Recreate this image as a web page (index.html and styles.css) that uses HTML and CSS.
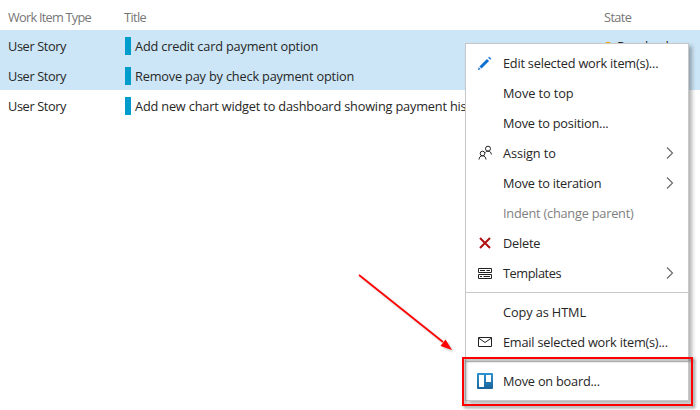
FILE: index.html
```
<!DOCTYPE html>
<html lang="en">
<head>
<meta charset="utf-8">
<title>Backlog</title>
<link rel="stylesheet" href="styles.css">
</head>
<body>
<div class="grid">
  <div class="row head"><span class="type-head">Work Item Type</span><span>Title</span><span>State</span></div>
  <div class="row selected"><span class="type">User Story</span><span class="title"><i class="bar"></i>Add credit card payment option</span><span class="state"><i class="dot"></i>Resolved</span></div>
  <div class="row selected"><span class="type">User Story</span><span class="title"><i class="bar"></i>Remove pay by check payment option</span><span></span></div>
  <div class="row"><span class="type">User Story</span><span class="title"><i class="bar"></i>Add new chart widget to dashboard showing payment history</span><span></span></div>
</div>

<div class="menu">
  <div class="item"><svg class="icon" viewBox="0 0 16 16"><path d="M3.500 12.500 11 5" stroke="#106fd2" stroke-width="3"/><path d="m12.200 3.800 1-1" stroke="#106fd2" stroke-width="3"/><path d="m1 15 .8-2.700L3.700 14.200z" fill="#106fd2"/></svg><span>Edit selected work item(s)...</span></div>
  <div class="item loose"><i class="icon"></i><span>Move to top</span></div>
  <div class="item"><i class="icon"></i><span>Move to position...</span></div>
  <div class="item loose"><svg class="icon line" viewBox="0 0 16 16"><circle cx="5.500" cy="8.500" r="2.300"/><path d="M2 14.500c.2-2.400 1.400-3.700 3.500-3.700s3.300 1.300 3.500 3.700"/><circle cx="11" cy="3.700" r="2.500"/><path d="M8.200 7.600c.7-1 1.500-1.400 2.800-1.400 2.200 0 3.200 1.300 3.400 3.300"/></svg><span>Assign to</span><svg class="chev" viewBox="0 0 8 12"><path d="m1 .5 5.500 5.500L1 11.500"/></svg></div>
  <div class="item"><i class="icon"></i><span>Move to iteration</span><svg class="chev" viewBox="0 0 8 12"><path d="m1 .5 5.500 5.500L1 11.500"/></svg></div>
  <div class="item disabled"><i class="icon"></i><span>Indent (change parent)</span></div>
  <div class="item"><svg class="icon" viewBox="0 0 16 16"><path d="m3 3 10 10M13 3 3 13" stroke="#b01010" stroke-width="2"/></svg><span>Delete</span></div>
  <div class="item tight"><svg class="icon line" viewBox="0 0 16 16"><path d="M1.500 3.500h13v4h-13zM1.500 9.500h13v4h-13zM3 5.500h5M9.500 5.500h3.500M3 11.500h2M6.500 11.500h6.500"/></svg><span>Templates</span><svg class="chev" viewBox="0 0 8 12"><path d="m1 .5 5.500 5.500L1 11.500"/></svg></div>
  <div class="sep"></div>
  <div class="item loose"><i class="icon"></i><span>Copy as HTML</span></div>
  <div class="item"><svg class="icon line" viewBox="0 0 16 16"><path d="M1.500 3.500h13v9h-13zM1.500 4 8 8.500 14.500 4"/></svg><span>Email selected work item(s)...</span></div>
  <div class="sep"></div>
  <div class="item"><svg class="icon" viewBox="0 0 16 16"><defs><linearGradient id="g" x2="0" y2="1"><stop stop-color="#2f93d1"/><stop offset="1" stop-color="#1a639b"/></linearGradient></defs><rect width="16" height="16" rx="1" fill="url(#g)"/><path d="M2 2h5v12H2zM9 2h5v7H9z" fill="#fff"/></svg><span>Move on board...</span></div>
</div>

<div class="highlight"></div>
<svg class="arrow" viewBox="0 0 110 90"><path d="m9 10 84 67" stroke="red" stroke-width="1.700"/><path d="M102 85 90.500 81 95.500 74.500z" fill="red"/></svg>
</body>
</html>
```
FILE: styles.css
```
* { box-sizing: border-box; }
body {
  margin: 0;
  width: 700px;
  height: 410px;
  overflow: hidden;
  position: relative;
  background: #fff;
  color: #262626;
  font: 12.75px/30px "Open Sans", "Noto Sans", sans-serif;
  letter-spacing: -0.22px;
}
.grid { padding-top: 2px; }
.row {
  display: grid;
  grid-template-columns: 116px 480px 88px;
  height: 30px;
  padding-left: 8px;
  line-height: 32px;
  white-space: nowrap;
}
.head { height: 28px; line-height: 30px; color: #767676; letter-spacing: -0.6px; }
.type-head { letter-spacing: -0.75px; }
.type { letter-spacing: -0.38px; }
.title { letter-spacing: -0.18px; }
.selected { background: #cde6f7; }
.title, .state { display: flex; align-items: center; }
.bar { width: 6px; height: 18px; margin: 0 4px 0 1px; background: #009ccc; }
.dot { width: 8px; height: 8px; margin-right: 5px; border-radius: 50%; background: #ff9d00; }
.menu {
  position: absolute;
  left: 465px;
  top: 43px;
  width: 224px;
  height: 358px;
  padding: 4px 0;
  background: #fff;
  border: 1px solid #c8c8c8;
  box-shadow: 3px 3px 4px rgba(0, 0, 0, .3);
}
.item {
  display: flex;
  align-items: center;
  height: 30px;
  padding: 0 14px 0 11px;
  white-space: nowrap;
}
.loose { letter-spacing: -0.1px; }
.tight { letter-spacing: -0.42px; }
.icon { flex: none; width: 16px; height: 16px; margin-right: 10px; }
.icon, .chev { fill: none; }
.line { stroke: #222; stroke-width: 1; }
.chev { width: 8px; height: 12px; margin-left: auto; stroke: #666; stroke-width: 1.1; }
.disabled { color: #808080; }
.sep { height: 1px; margin: 4px 0; background: #c8c8c8; }
.highlight {
  position: absolute;
  left: 462px;
  top: 357px;
  width: 231px;
  height: 49px;
  border: 2px solid #f00;
  filter: drop-shadow(2px 2px 1.500px rgba(0, 0, 0, .45));
}
.arrow {
  position: absolute;
  left: 350px;
  top: 265px;
  width: 110px;
  height: 90px;
  filter: drop-shadow(2px 2px 1px rgba(0, 0, 0, .2));
}
```
